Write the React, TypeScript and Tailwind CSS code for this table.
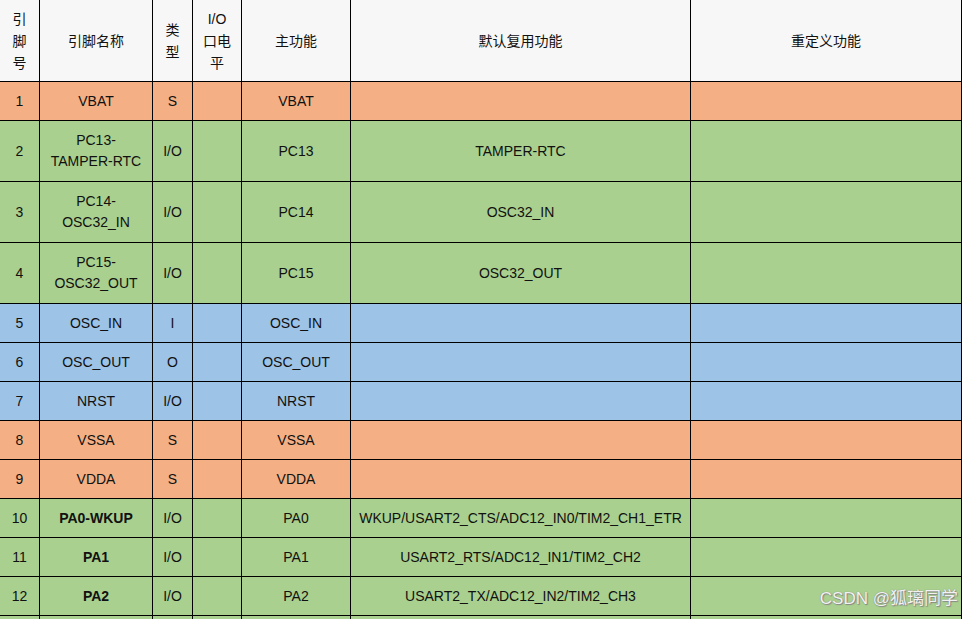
import React from "react";

type Row = {
  no: string;
  name: string[];
  bold?: boolean;
  type: string;
  main: string;
  alt: string;
  color: "o" | "g" | "b";
  tall?: boolean;
};

const rows: Row[] = [
  { no: "1", name: ["VBAT"], type: "S", main: "VBAT", alt: "", color: "o" },
  { no: "2", name: ["PC13-", "TAMPER-RTC"], type: "I/O", main: "PC13", alt: "TAMPER-RTC", color: "g", tall: true },
  { no: "3", name: ["PC14-", "OSC32_IN"], type: "I/O", main: "PC14", alt: "OSC32_IN", color: "g", tall: true },
  { no: "4", name: ["PC15-", "OSC32_OUT"], type: "I/O", main: "PC15", alt: "OSC32_OUT", color: "g", tall: true },
  { no: "5", name: ["OSC_IN"], type: "I", main: "OSC_IN", alt: "", color: "b" },
  { no: "6", name: ["OSC_OUT"], type: "O", main: "OSC_OUT", alt: "", color: "b" },
  { no: "7", name: ["NRST"], type: "I/O", main: "NRST", alt: "", color: "b" },
  { no: "8", name: ["VSSA"], type: "S", main: "VSSA", alt: "", color: "o" },
  { no: "9", name: ["VDDA"], type: "S", main: "VDDA", alt: "", color: "o" },
  { no: "10", name: ["PA0-WKUP"], bold: true, type: "I/O", main: "PA0", alt: "WKUP/USART2_CTS/ADC12_IN0/TIM2_CH1_ETR", color: "g" },
  { no: "11", name: ["PA1"], bold: true, type: "I/O", main: "PA1", alt: "USART2_RTS/ADC12_IN1/TIM2_CH2", color: "g" },
  { no: "12", name: ["PA2"], bold: true, type: "I/O", main: "PA2", alt: "USART2_TX/ADC12_IN2/TIM2_CH3", color: "g" },
  { no: "", name: [], type: "", main: "", alt: "", color: "g" },
];

const bgClass = {
  o: "bg-[#f4b084]",
  g: "bg-[#a9d08e]",
  b: "bg-[#9dc3e6]",
};

function Cell({
  children,
  bg,
  h,
  bold,
}: {
  children?: React.ReactNode;
  bg: string;
  h: string;
  bold?: boolean;
}) {
  return (
    <div
      className={`${bg} ${h} ${bold ? "font-bold" : ""} flex flex-col items-center justify-center text-center leading-[21px] text-[14px] text-[#111111] px-1 whitespace-nowrap`}
    >
      {children}
    </div>
  );
}

function HeadCell({ lines }: { lines: string[] }) {
  return (
    <div className="bg-[#f7f7f7] h-[81px] flex flex-col items-center justify-center text-center leading-[22px] text-[14px] text-[#111111]">
      {lines.map((l, i) => (
        <div key={i}>{l}</div>
      ))}
    </div>
  );
}

export default function App() {
  return (
    <div
      className="relative w-[964px] h-[619px] overflow-hidden bg-white"
      style={{ fontFamily: '"Liberation Sans", Arial, "Noto Sans CJK SC", sans-serif' }}
    >
      <div className="w-[962px] bg-black pr-px grid gap-px grid-cols-[39px_112px_39px_48px_108px_339px_270px]">
        <HeadCell lines={["引", "脚", "号"]} />
        <HeadCell lines={["引脚名称"]} />
        <HeadCell lines={["类", "型"]} />
        <HeadCell lines={["I/O", "口电", "平"]} />
        <HeadCell lines={["主功能"]} />
        <HeadCell lines={["默认复用功能"]} />
        <HeadCell lines={["重定义功能"]} />
        {rows.map((r, idx) => {
          const bg = bgClass[r.color];
          const h = r.tall ? "h-[60px]" : "h-[38px]";
          return (
            <React.Fragment key={idx}>
              <Cell bg={bg} h={h}>{r.no}</Cell>
              <Cell bg={bg} h={h} bold={r.bold}>
                {r.name.map((n, i) => (
                  <div key={i}>{n}</div>
                ))}
              </Cell>
              <Cell bg={bg} h={h}>{r.type}</Cell>
              <Cell bg={bg} h={h} />
              <Cell bg={bg} h={h}>{r.main}</Cell>
              <Cell bg={bg} h={h}>{r.alt}</Cell>
              <Cell bg={bg} h={h} />
            </React.Fragment>
          );
        })}
      </div>
      <div
        className="absolute right-[6px] top-[589px] text-[17px] leading-[20px] text-[#f2f2f2] whitespace-nowrap"
        style={{ textShadow: "0 0 1px #777, 1px 1px 1px #888" }}
      >
        CSDN @狐璃同学
      </div>
    </div>
  );
}
